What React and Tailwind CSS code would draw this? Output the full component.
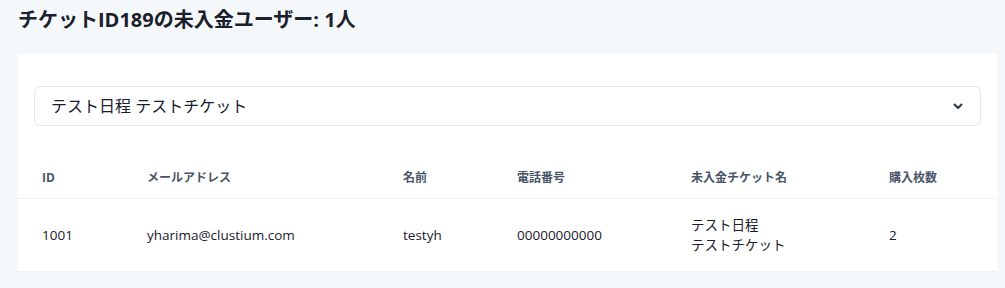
const FONT = "font-['Segoe_UI','Open_Sans','Noto_Sans_CJK_JP',sans-serif]";

const ROWS = [
  {
    id: "1001",
    email: "yharima@clustium.com",
    name: "testyh",
    phone: "00000000000",
    ticket: ["テスト日程", "テストチケット"],
    count: 2,
  },
];

const COLS = [
  { label: "ID", w: "w-[105px]" },
  { label: "メールアドレス", w: "w-[256px]" },
  { label: "名前", w: "w-[114px]" },
  { label: "電話番号", w: "w-[174px]" },
  { label: "未入金チケット名", w: "w-[198px]" },
  { label: "購入枚数", w: "" },
];

function Chevron() {
  return (
    <svg width="12" height="12" viewBox="0 0 12 12" className="text-[#2d3748]">
      <path d="M2.5 4.5 6 8l3.5-3.5" fill="none" stroke="currentColor" strokeWidth="2" strokeLinecap="round" strokeLinejoin="round" />
    </svg>
  );
}

export default function App() {
  return (
    <div className={`${FONT} h-[288px] w-[1005px] bg-[#f5f8fb] px-[18px] pt-[6px] text-[#1a202c]`}>
      <h1 className="text-[20px] font-bold leading-[28px]">チケットID189の未入金ユーザー: 1人</h1>

      <div className="mt-[20px] w-[979px] bg-white pt-8">
        <div className="mx-4 flex h-[40px] items-center justify-between rounded-md border border-[#e2e8f0] pl-4 pr-4">
          <span className="text-[16px]">テスト日程 テストチケット</span>
          <Chevron />
        </div>

        <table className="mt-[32px] w-full border-collapse text-left">
          <thead>
            <tr className="border-b border-[#edf2f7]">
              {COLS.map((c) => (
                <th
                  key={c.label}
                  className={`${c.w} px-6 py-3 text-[12px] font-bold leading-[16px] text-[#4a5568]`}
                >
                  {c.label}
                </th>
              ))}
            </tr>
          </thead>
          <tbody>
            {ROWS.map((r) => (
              <tr key={r.id} className="border-b border-[#edf2f7] text-[13.5px] leading-[20px]">
                <td className="px-6 py-4">{r.id}</td>
                <td className="px-6 py-4">{r.email}</td>
                <td className="px-6 py-4">{r.name}</td>
                <td className="px-6 py-4">{r.phone}</td>
                <td className="px-6 py-4">
                  {r.ticket.map((t) => (
                    <div key={t}>{t}</div>
                  ))}
                </td>
                <td className="px-6 py-4">{r.count}</td>
              </tr>
            ))}
          </tbody>
        </table>
      </div>
    </div>
  );
}
